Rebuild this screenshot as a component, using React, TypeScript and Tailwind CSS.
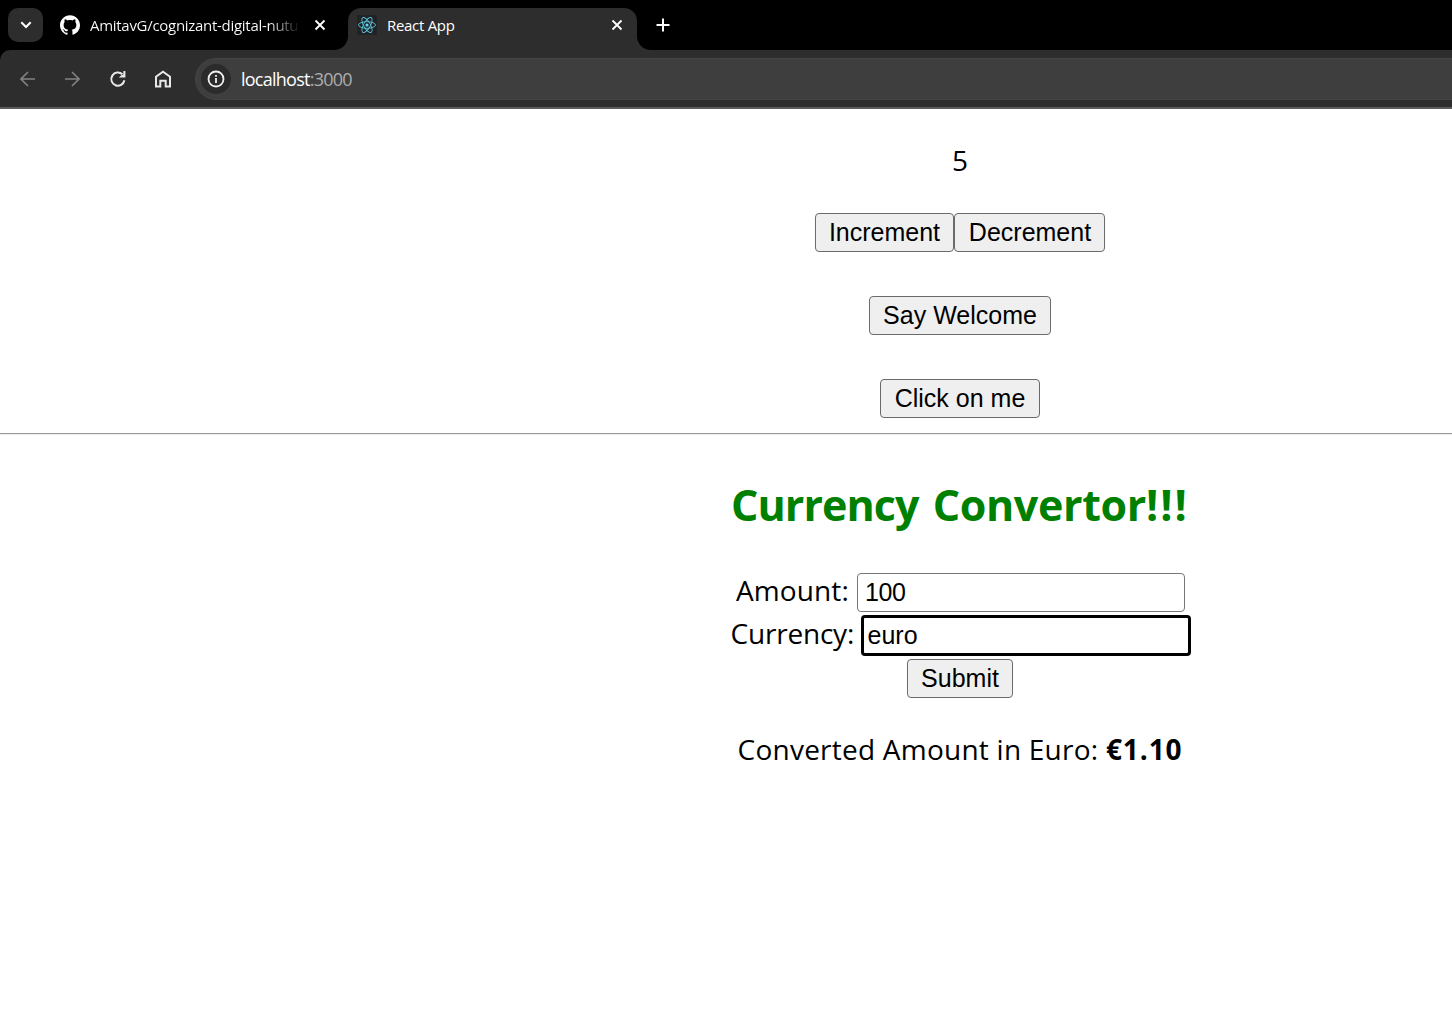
import { useState } from "react";
import type { ReactNode } from "react";
import { SiGithub } from "react-icons/si";

function CloseIcon() {
  return (
    <svg width="12" height="12" viewBox="0 0 12 12" fill="none" stroke="#fff" strokeWidth="1.8">
      <path d="M1.5 1.5l9 9M10.5 1.5l-9 9" />
    </svg>
  );
}

function ReactIcon() {
  return (
    <svg width="20" height="20" viewBox="0 0 20 20" fill="none" stroke="#58c4dc" strokeWidth="0.9">
      <rect width="20" height="20" rx="1" fill="#202224" stroke="none" />
      <ellipse cx="10" cy="10" rx="8.5" ry="3.3" />
      <ellipse cx="10" cy="10" rx="8.5" ry="3.3" transform="rotate(60 10 10)" />
      <ellipse cx="10" cy="10" rx="8.5" ry="3.3" transform="rotate(120 10 10)" />
      <circle cx="10" cy="10" r="1.6" fill="#61dafb" stroke="none" />
    </svg>
  );
}

function TabStrip() {
  return (
    <div className="flex h-[50px] bg-black text-[15px] text-white">
      <div className="mt-2 ml-2 flex h-[34px] w-[35px] items-center justify-center rounded-[10px] bg-[#2d2d2d]">
        <svg width="12" height="8" viewBox="0 0 12 8" fill="none" stroke="#fff" strokeWidth="2">
          <path d="M1.3 1.3L6 6l4.7-4.7" />
        </svg>
      </div>
      <div className="ml-[17px] flex h-[50px] w-[274px] items-center">
        <SiGithub size={20} />
        <span className="ml-[10px] w-[210px] whitespace-nowrap bg-linear-to-r from-white from-85% to-transparent to-100% bg-clip-text font-['Open_Sans',sans-serif] tracking-[-0.29px] text-transparent">
          AmitavG/cognizant-digital-nutu
        </span>
        <span className="ml-[14px]">
          <CloseIcon />
        </span>
      </div>
      <div className="flex flex-1">
        <div className="mt-[36px] h-[14px] w-[14px] bg-[#2d2d2d]">
          <div className="h-full rounded-br-[14px] bg-black" />
        </div>
        <div className="mt-[8px] flex w-[289px] items-center rounded-t-[13px] bg-[#2d2d2d] pr-[14px] pb-[8px] pl-[9px]">
          <ReactIcon />
          <span className="ml-[10px] flex-1 font-['Open_Sans',sans-serif] tracking-[-0.3px]">React App</span>
          <CloseIcon />
        </div>
        <div className="mt-[36px] h-[14px] w-[14px] bg-[#2d2d2d]">
          <div className="h-full rounded-bl-[14px] bg-black" />
        </div>
        <svg className="mt-[18px] ml-[5px]" width="14" height="14" viewBox="0 0 14 14" stroke="#fff" strokeWidth="2">
          <path d="M7 .5v13M.5 7h13" />
        </svg>
      </div>
    </div>
  );
}

function Toolbar() {
  return (
    <div className="bg-black">
      <div className="flex h-[57px] items-center rounded-tl-[10px] bg-[#2d2d2d] pl-5">
        <svg width="16" height="16" viewBox="0 0 16 16" fill="none" stroke="#828282" strokeWidth="1.6">
          <path d="M15 8H1.2M8 1L1 8l7 7" />
        </svg>
        <svg className="ml-[28px]" width="16" height="16" viewBox="0 0 16 16" fill="none" stroke="#828282" strokeWidth="1.6">
          <path d="M1 8h13.8M8 1l7 7-7 7" />
        </svg>
        <svg className="ml-[29px]" width="18" height="18" viewBox="0 0 18 18" fill="none" stroke="#e8e8e8" strokeWidth="2">
          <path d="M15.4 10.3A6.6 6.6 0 1 1 13.4 4.3" />
          <path d="M16.4 1v6.6H9.8l2.4-2.4 2-.5.2-3.7z" fill="#e8e8e8" stroke="none" />
        </svg>
        <svg className="ml-[27px]" width="18" height="18" viewBox="0 0 18 18" fill="none" stroke="#e8e8e8" strokeWidth="2">
          <path d="M2 16.5V6.8L9 1.8l7 5v9.7h-4.3v-5.8H6.3v5.8z" />
        </svg>
        <div className="ml-[23px] flex h-[42px] flex-1 items-center rounded-l-full border-y border-l border-[#444] bg-[#3e3e3e] pl-[5px]">
          <div className="flex h-[30px] w-[30px] items-center justify-center rounded-full bg-[#2b2b2b]">
            <svg width="18" height="18" viewBox="0 0 18 18" fill="none" stroke="#f0f0f0" strokeWidth="1.8">
              <circle cx="9" cy="9" r="7.5" />
              <path d="M9 8v5M9 4.9v1.8" />
            </svg>
          </div>
          <span className="ml-[10px] pt-[2px] font-['Open_Sans',sans-serif] text-[18px] tracking-[-0.75px] text-white">
            localhost<span className="text-[#adadad]">:3000</span>
          </span>
        </div>
      </div>
      <div className="h-[2px] bg-[#5c5c5c]" />
    </div>
  );
}

function Button({ children, className, onClick }: { children: ReactNode; className: string; onClick?: () => void }) {
  return (
    <button
      type="button"
      onClick={onClick}
      className={`h-[39px] rounded-[4px] border border-[#6b6b6b] bg-[#efefef] font-['Liberation_Sans',sans-serif] text-[25px] leading-none ${className}`}
    >
      {children}
    </button>
  );
}

function Counter() {
  const [count, setCount] = useState(5);
  return (
    <section className="flex flex-col items-center">
      <p className="mt-[31px] h-[40px] text-[28px] leading-[40px]">{count}</p>
      <div className="mt-[33px] flex">
        <Button className="w-[139px]" onClick={() => setCount(count + 1)}>Increment</Button>
        <Button className="w-[151px] pl-px" onClick={() => setCount(count - 1)}>Decrement</Button>
      </div>
      <Button className="mt-[44px] w-[182px]">Say Welcome</Button>
      <Button className="mt-[44px] w-[160px]">Click on me</Button>
    </section>
  );
}

function Converter() {
  const field = "rounded-[4px] bg-white font-['Liberation_Sans',sans-serif] text-[25px] outline-none";
  return (
    <section className="flex flex-col items-center">
      <h1 className="mt-[40px] h-[60px] whitespace-nowrap text-[43px] leading-[60px] font-bold text-[#008000]">
        <span className="tracking-[-0.95px]">Currency</span>{" "}
        <span className="ml-[3px] tracking-[-0.35px]">Convertor</span>
        <span className="tracking-[2px]">!!!</span>
      </h1>
      <label className="mt-[37px] flex h-[40px] items-center">
        <span className="-mt-[5px] w-[122px] pl-px text-[28px] leading-[40px] tracking-[0.1px]">Amount:</span>
        <input className={`${field} h-[39px] w-[328px] border border-[#767676] px-[7px] tracking-[-0.4px]`} defaultValue="100" />
      </label>
      <label className="mt-[2px] flex h-[42px] items-center">
        <span className="-mt-[5px] w-[131px] pl-px text-[28px] leading-[40px] tracking-[-0.2px]">Currency:</span>
        <input className={`${field} h-[41px] w-[330px] border-[3px] border-black px-[4px]`} defaultValue="euro" />
      </label>
      <Button className="mt-[3px] w-[106px]">Submit</Button>
      <p className="mt-[31px] h-[40px] whitespace-nowrap text-[28px] leading-[40px] tracking-[0.24px]">
        Converted Amount in Euro: <b className="tracking-[0.9px]">€1.10</b>
      </p>
    </section>
  );
}

export default function App() {
  return (
    <div className="h-[1015px] w-full overflow-hidden bg-white">
      <TabStrip />
      <Toolbar />
      <main className="w-[1920px] font-['Open_Sans',sans-serif] text-black">
        <Counter />
        <hr className="mt-[15px] h-[2px] border-t border-b border-t-[#9a9a9a] border-b-[#eeeeee]" />
        <Converter />
      </main>
    </div>
  );
}
